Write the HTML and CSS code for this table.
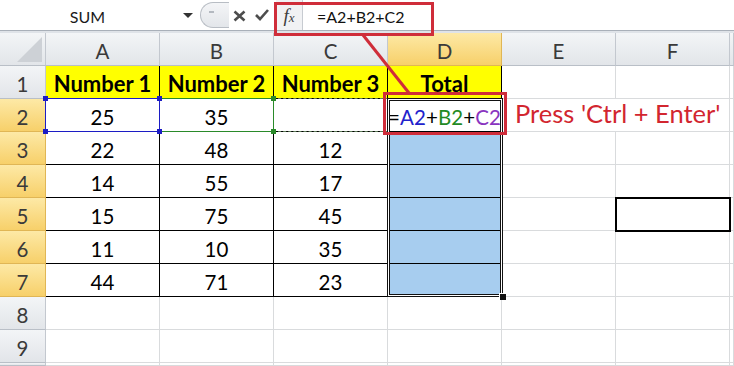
FILE: index.html
```html
<!DOCTYPE html>
<html>
<head>
<meta charset="utf-8">
<link rel="stylesheet" href="styles.css">
</head>
<body>
<div class="fbar">
  <div class="namebox"><span class="name">SUM</span><span class="dd"></span></div>
  <div class="pill"><span class="dash"></span></div>
  <svg class="ico icx" width="13" height="12" viewBox="0 0 13 12"><path d="M1.5 1.5 L11.5 10.5 M11.5 1.5 L1.5 10.5" stroke="#4d4d4d" stroke-width="2.6" fill="none"/></svg>
  <svg class="ico ick" width="14" height="12" viewBox="0 0 14 12"><path d="M1 6 L5 10 L13 1" stroke="#4d4d4d" stroke-width="2.6" fill="none"/></svg>
  <div class="fx"><span class="ff">f</span><span class="fxx">x</span></div>
  <div class="ftext">=A2+B2+C2</div>
</div>
<div class="band"></div>
<div class="sheet">
  <div class="grid">
    <div class="c h corner"><svg width="25" height="25" viewBox="0 0 25 25"><path d="M25 0 L25 25 L0 25 Z" fill="#cdd1d6"/></svg></div>
    <div class="c h">A</div><div class="c h">B</div><div class="c h">C</div><div class="c h hs">D</div><div class="c h">E</div><div class="c h">F</div><div class="c h"></div>

    <div class="c h">1</div>
    <div class="c t y">Number 1</div><div class="c t y">Number 2</div><div class="c t y">Number 3</div><div class="c t y">Total</div><div class="c"></div><div class="c"></div><div class="c"></div>

    <div class="c h hs">2</div>
    <div class="c t">25</div><div class="c t">35</div><div class="c t"></div>
    <div class="c t d2"><span>=</span><span class="ra">A2</span><span>+</span><span class="rb">B2</span><span>+</span><span class="rc">C2</span></div>
    <div class="c press">Press 'Ctrl + Enter'</div><div class="c"></div>

    <div class="c h hs">3</div>
    <div class="c t">22</div><div class="c t">48</div><div class="c t">12</div><div class="c t sel"></div><div class="c"></div><div class="c"></div><div class="c"></div>

    <div class="c h hs">4</div>
    <div class="c t">14</div><div class="c t">55</div><div class="c t">17</div><div class="c t sel"></div><div class="c"></div><div class="c"></div><div class="c"></div>

    <div class="c h hs">5</div>
    <div class="c t">15</div><div class="c t">75</div><div class="c t">45</div><div class="c t sel"></div><div class="c"></div><div class="c"></div><div class="c"></div>

    <div class="c h hs">6</div>
    <div class="c t">11</div><div class="c t">10</div><div class="c t">35</div><div class="c t sel"></div><div class="c"></div><div class="c"></div><div class="c"></div>

    <div class="c h hs">7</div>
    <div class="c t">44</div><div class="c t">71</div><div class="c t">23</div><div class="c t sel"></div><div class="c"></div><div class="c"></div><div class="c"></div>

    <div class="c h">8</div>
    <div class="c"></div><div class="c"></div><div class="c"></div><div class="c"></div><div class="c"></div><div class="c"></div><div class="c"></div>

    <div class="c h">9</div>
    <div class="c"></div><div class="c"></div><div class="c"></div><div class="c"></div><div class="c"></div><div class="c"></div><div class="c"></div>

    <div class="c h last"></div>
    <div class="c last"></div><div class="c last"></div><div class="c last"></div><div class="c last"></div><div class="c last"></div><div class="c last"></div><div class="c last"></div>
  </div>

  <div class="rng rng-c"><i class="hd tl"></i><i class="hd bl"></i></div>
  <div class="rng rng-b"><i class="hd tr"></i><i class="hd br"></i></div>
  <div class="rng rng-a"><i class="hd tl"></i><i class="hd bl"></i><i class="hd tr"></i><i class="hd br"></i></div>
  <div class="selbox"></div>
  <div class="fill"></div>
  <div class="fbox5"></div>
  <div class="redbox d2box"></div>
</div>
<div class="redbox fbox"></div>
<svg class="arrow" width="734" height="366" viewBox="0 0 734 366"><line x1="363" y1="35" x2="409" y2="93" stroke="#cf2d3a" stroke-width="3"/></svg>
</body>
</html>
```

FILE: styles.css
```css
html, body {
  margin: 0;
  padding: 0;
}
body {
  width: 734px;
  height: 366px;
  overflow: hidden;
  background: #fff;
  font-family: Lato, "Open Sans", sans-serif;
  color: #000;
  position: relative;
}

/* formula bar */
.fbar {
  height: 30px;
  border-bottom: 1px solid #a9b0b9;
  display: flex;
  align-items: center;
  background: #fff;
  font-size: 16px;
}
.namebox {
  width: 198px;
  height: 30px;
  display: flex;
  align-items: center;
  flex: none;
}
.name {
  width: 175px;
  text-align: center;
  padding-top: 3px;
  color: #1a1a1a;
}
.dd {
  width: 0;
  height: 0;
  border-left: 5px solid transparent;
  border-right: 5px solid transparent;
  border-top: 5px solid #333;
  margin-left: 8px;
  margin-top: 1px;
}
.pill {
  width: 28px;
  height: 24px;
  margin-left: 2px;
  border: 1px solid #b8bdc4;
  border-right: none;
  border-radius: 13px 0 0 13px;
  background: linear-gradient(#f4f5f7, #e3e6ea);
  flex: none;
  display: flex;
  align-items: center;
}
.dash {
  width: 5px;
  height: 2px;
  background: #b4b9c0;
  margin-left: 8px;
  margin-top: -6px;
}
.ico {
  flex: none;
  display: block;
}
.icx {
  margin-left: 4px;
  margin-top: 2px;
}
.ick {
  margin-left: 9px;
  margin-top: 0px;
}
.fx {
  margin-left: 7px;
  width: 27px;
  height: 30px;
  box-sizing: border-box;
  border-right: 1px solid #c7cbd1;
  background: #f1f2f4;
  display: flex;
  align-items: center;
  justify-content: center;
  font-family: "Liberation Serif", serif;
  font-style: italic;
  color: #3d3d3d;
  flex: none;
}
.ff {
  font-size: 19px;
  padding-top: 1px;
}
.fxx {
  font-size: 13px;
  padding-top: 5px;
}
.ftext {
  padding-left: 14px;
  padding-top: 3px;
  color: #111;
}
.band {
  height: 2px;
  background: #dfe3e8;
}

/* sheet */
.sheet {
  position: relative;
}
.grid {
  display: grid;
  grid-template-columns: 46px repeat(6, 114px) 4px;
  grid-template-rows: repeat(10, 33px) 3px;
  font-size: 20.5px;
}
.c {
  box-sizing: border-box;
  border-right: 1px solid #d9dbdd;
  border-bottom: 1px solid #d9dbdd;
  text-align: center;
  padding-top: 4px;
  line-height: 28px;
  white-space: nowrap;
  overflow: hidden;
}
.c.last {
  padding: 0;
  line-height: 0;
}
.h {
  background: linear-gradient(#f3f5f7, #e2e5e9);
  border-right-color: #c3c8cf;
  border-bottom-color: #b9bfc7;
  color: #3a3a3a;
}
.hs {
  background: linear-gradient(#fde9a6, #f7d06a);
  border-right-color: #e0b655;
  border-bottom-color: #e0b655;
}
.corner {
  display: flex;
  align-items: flex-end;
  justify-content: flex-end;
  padding: 0 3px 3px 0;
}
.t {
  border-right-color: #000;
  border-bottom-color: #000;
}
.y {
  background: #ffff00;
  font-weight: 700;
  font-size: 22px;
}
.sel {
  background: #a7cdef;
}
.d2 {
  text-align: left;
  overflow: visible;
  letter-spacing: 0.1px;
}
.ra { color: #2222cc; }
.rb { color: #238a23; }
.rc { color: #8a35c0; }
.press {
  grid-column: span 2;
  text-align: left;
  padding-left: 13px;
  color: #d2262f;
  font-size: 25.5px;
  line-height: 21px;
}

/* overlays */
.rng {
  position: absolute;
  box-sizing: border-box;
  top: 65px;
  height: 34px;
  width: 115px;
}
.rng-a {
  left: 45px;
  border: 1px solid #1c1cc4;
}
.rng-b {
  left: 159px;
  border: 1px solid #2a8a2a;
}
.rng-c {
  left: 273px;
  border: 1px dashed #5f7f5a;
  border-right: none;
}
.hd {
  position: absolute;
  width: 5px;
  height: 5px;
}
.rng-a .hd { background: #1c1cc4; }
.rng-b .hd { background: #2a8a2a; }
.rng-c .hd { background: #3f7f3a; }
.tl { left: -3px; top: -3px; }
.bl { left: -3px; bottom: -3px; }
.tr { right: -3px; top: -3px; }
.br { right: -3px; bottom: -3px; }
.selbox {
  position: absolute;
  box-sizing: border-box;
  left: 387px;
  top: 65px;
  width: 116px;
  height: 199px;
  border: 1px solid #111;
  box-shadow: inset 0 0 0 1px #fff, inset 0 0 0 2px #111;
}
.fill {
  position: absolute;
  left: 499px;
  top: 260px;
  width: 6px;
  height: 6px;
  background: #111;
  border: 1px solid #fff;
  border-right: none;
  border-bottom: none;
}
.fbox5 {
  position: absolute;
  box-sizing: border-box;
  left: 615px;
  top: 164px;
  width: 116px;
  height: 35px;
  border: 2px solid #000;
}
.redbox {
  position: absolute;
  box-sizing: border-box;
  border: 3px solid #cf2d3a;
}
.d2box {
  left: 383px;
  top: 59px;
  width: 124px;
  height: 43px;
}
.fbox {
  left: 274px;
  top: 2px;
  width: 160px;
  height: 34px;
}
.arrow {
  position: absolute;
  left: 0;
  top: 0;
  pointer-events: none;
}
```
